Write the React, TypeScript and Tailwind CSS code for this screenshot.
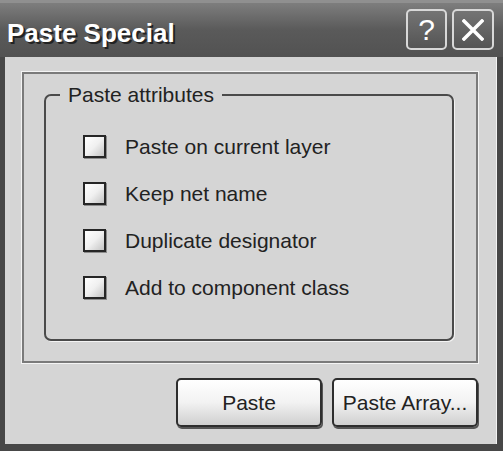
import React from 'react';

const options = [
  'Paste on current layer',
  'Keep net name',
  'Duplicate designator',
  'Add to component class',
];

function CheckBox() {
  return (
    <span className="block w-[23px] h-[23px] shrink-0 border-2 border-[#262626] bg-gradient-to-br from-white via-[#f0f0f0] to-[#c4c4c4] shadow-[1px_1px_0_#8c8c8c]" />
  );
}

function Button({ label }: { label: string }) {
  return (
    <button className="w-[146px] h-[49px] rounded-[5px] border-2 border-[#2e2e2e] bg-gradient-to-b from-white via-[#f2f2f2] to-[#d0d0d0] shadow-[1px_2px_0_#555] text-[21px] leading-none text-[#222]">
      {label}
    </button>
  );
}

export default function App() {
  return (
    <div
      className="w-[503px] h-[451px] flex flex-col bg-[#474747] overflow-hidden"
      style={{ fontFamily: '"Liberation Sans", Arial, sans-serif' }}
    >
      {/* Title bar */}
      <div className="h-[57px] shrink-0 flex items-start bg-gradient-to-b from-[#7e7e7e] via-[#5a5a5a] to-[#525252] pl-[7px] pr-[9px] border-t-[3px] border-[#909090]">
        <span className="mt-[17px] text-[26px] leading-none font-bold text-white [text-shadow:2px_2px_0_#222]">
          Paste Special
        </span>
        <div className="ml-auto mt-[6px] flex gap-[5px]">
          <div className="w-[41px] h-[41px] rounded-[5px] border-2 border-[#d8d8d8] bg-gradient-to-b from-[#747474] to-[#555] flex items-center justify-center text-white text-[30px] leading-none">
            ?
          </div>
          <div className="w-[42px] h-[41px] rounded-[5px] border-2 border-[#d8d8d8] bg-gradient-to-b from-[#747474] to-[#555] flex items-center justify-center">
            <svg width="22" height="22" viewBox="0 0 22 22">
              <path d="M2 2 L20 20 M20 2 L2 20" stroke="#fff" strokeWidth="3.5" strokeLinecap="square" />
            </svg>
          </div>
        </div>
      </div>

      {/* Client area */}
      <div className="ml-[5px] mr-[6px] mb-[7px] flex-1 flex flex-col bg-[#d5d5d5] border-r border-[#f2f2f2]">
        <div className="mt-[15px] ml-[17px] w-[456px] h-[291px] border-2 border-[#7a7a7a] shadow-[0_0_0_1px_#f4f4f4] pt-[20px] pl-[20px]">
          <div className="relative w-[410px] h-[247px] rounded-[7px] border-2 border-[#4a4a4a] shadow-[1px_1px_0_#f4f4f4]">
            <span className="absolute -top-[13px] left-[14px] px-[8px] bg-[#d5d5d5] text-[21px] leading-[24px] text-[#222]">
              Paste attributes
            </span>
            <div className="pt-[27px] pl-[37px] flex flex-col">
              {options.map((o) => (
                <div key={o} className="h-[47px] flex items-center gap-[19px]">
                  <CheckBox />
                  <span className="text-[21px] leading-none text-[#222]">{o}</span>
                </div>
              ))}
            </div>
          </div>
        </div>

        <div className="mt-[15px] pr-[18px] flex justify-end gap-[10px]">
          <Button label="Paste" />
          <Button label="Paste Array..." />
        </div>
      </div>
    </div>
  );
}
